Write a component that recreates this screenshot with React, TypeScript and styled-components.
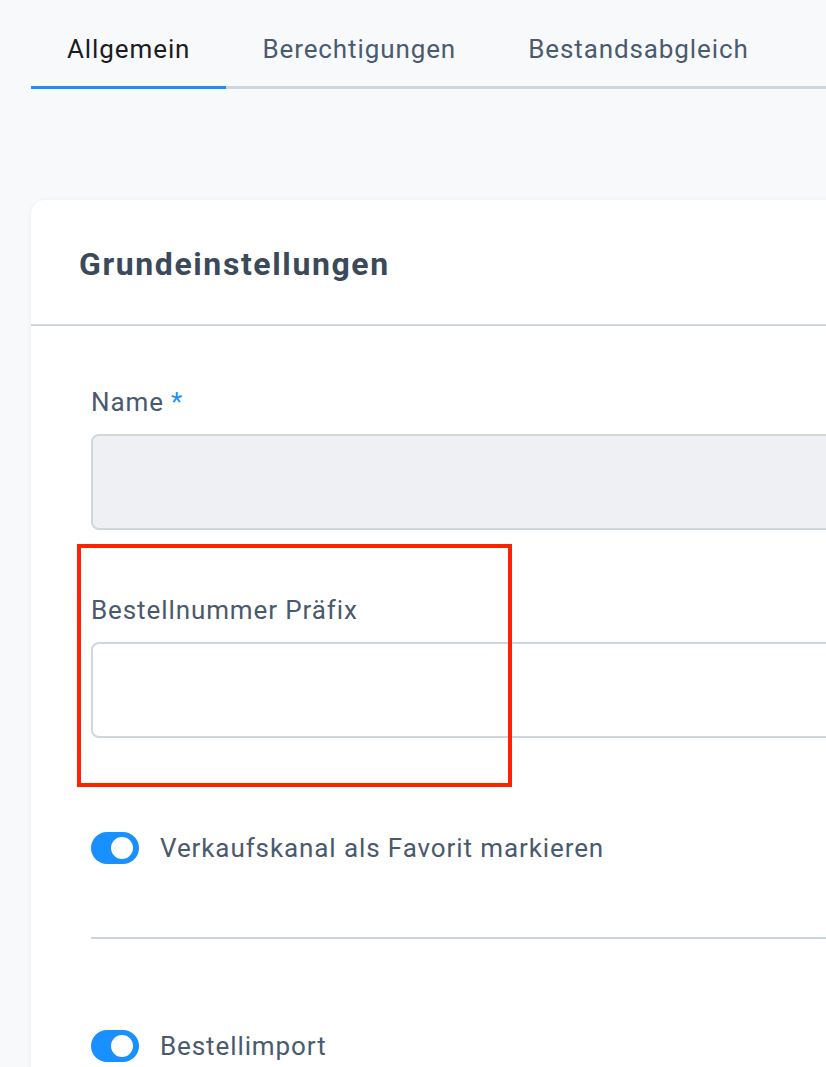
import React from 'react';
import styled, { createGlobalStyle } from 'styled-components';

const GlobalStyle = createGlobalStyle`
  html, body {
    margin: 0;
    padding: 0;
    background: #f8f9fb;
    font-family: Roboto, "Liberation Sans", Arial, sans-serif;
    overflow: hidden;
  }
`;

const Page = styled.div`
  width: 826px;
  height: 1067px;
  overflow: hidden;
  padding-left: 31px;
  box-sizing: border-box;
`;

const TabBar = styled.div`
  display: flex;
  width: 1200px;
  border-bottom: 3px solid #cdd5dd;
`;

const Tab = styled.div<{ $active?: boolean }>`
  padding: 34px 36px 21px;
  font-size: 26px;
  letter-spacing: 0.9px;
  line-height: 31px;
  color: ${p => (p.$active ? '#1b1d21' : '#4b5b6f')};
  border-bottom: 3px solid ${p => (p.$active ? '#1890ff' : 'transparent')};
  margin-bottom: -3px;
  white-space: nowrap;
`;

const Card = styled.div`
  margin-top: 111px;
  width: 1100px;
  background: #fff;
  border-radius: 14px;
  box-shadow: 0 1px 4px rgba(30, 45, 60, 0.08);
`;

const CardHeader = styled.div`
  height: 124px;
  padding: 0 48px;
  display: flex;
  align-items: center;
  border-bottom: 2px solid #cdd5dd;
`;

const Heading = styled.h2`
  margin: 0;
  font-size: 32px;
  letter-spacing: 1.6px;
  font-weight: 700;
  color: #3b4a5b;
  padding-top: 4px;
`;

const CardBody = styled.div`
  padding: 60px 0 120px 60px;
`;

const Field = styled.div`
  position: relative;
  & + & {
    margin-top: 64px;
  }
`;

const Label = styled.div`
  font-size: 26px;
  letter-spacing: 0.9px;
  line-height: 32px;
  color: #4a5a6e;
  margin-bottom: 16px;
`;

const Required = styled.span`
  color: #1890ff;
  margin-left: 7px;
`;

const Input = styled.div<{ $disabled?: boolean }>`
  height: 96px;
  box-sizing: border-box;
  border: 2px solid #cfd6dd;
  border-radius: 8px;
  background: ${p => (p.$disabled ? '#eef0f3' : '#fff')};
`;

const Highlight = styled.div`
  position: absolute;
  left: -14px;
  top: -50px;
  width: 435px;
  height: 243px;
  box-sizing: border-box;
  border: 4px solid #ff2200;
  pointer-events: none;
`;

const ToggleRow = styled.div<{ $top: number }>`
  display: flex;
  align-items: center;
  gap: 21px;
  margin-top: ${p => p.$top}px;
`;

const Switch = styled.div`
  width: 48px;
  height: 32px;
  border-radius: 16px;
  background: #1890ff;
  display: flex;
  align-items: center;
  justify-content: flex-end;
  padding-right: 6px;
  box-sizing: border-box;
  flex-shrink: 0;

  &::after {
    content: '';
    width: 22px;
    height: 22px;
    border-radius: 50%;
    background: #fff;
  }
`;

const ToggleText = styled.span`
  font-size: 26px;
  letter-spacing: 0.9px;
  line-height: 32px;
  color: #4a5a6e;
`;

const Divider = styled.div`
  margin-top: 73px;
  height: 2px;
  background: #cdd5dd;
`;

export default function App() {
  return (
    <>
      <GlobalStyle />
      <Page>
        <TabBar>
          <Tab $active>Allgemein</Tab>
          <Tab>Berechtigungen</Tab>
          <Tab>Bestandsabgleich</Tab>
        </TabBar>
        <Card>
          <CardHeader>
            <Heading>Grundeinstellungen</Heading>
          </CardHeader>
          <CardBody>
            <Field>
              <Label>
                Name<Required>*</Required>
              </Label>
              <Input $disabled />
            </Field>
            <Field>
              <Label>Bestellnummer Präfix</Label>
              <Input />
              <Highlight />
            </Field>
            <ToggleRow $top={94}>
              <Switch />
              <ToggleText>Verkaufskanal als Favorit markieren</ToggleText>
            </ToggleRow>
            <Divider />
            <ToggleRow $top={91}>
              <Switch />
              <ToggleText>Bestellimport</ToggleText>
            </ToggleRow>
          </CardBody>
        </Card>
      </Page>
    </>
  );
}
